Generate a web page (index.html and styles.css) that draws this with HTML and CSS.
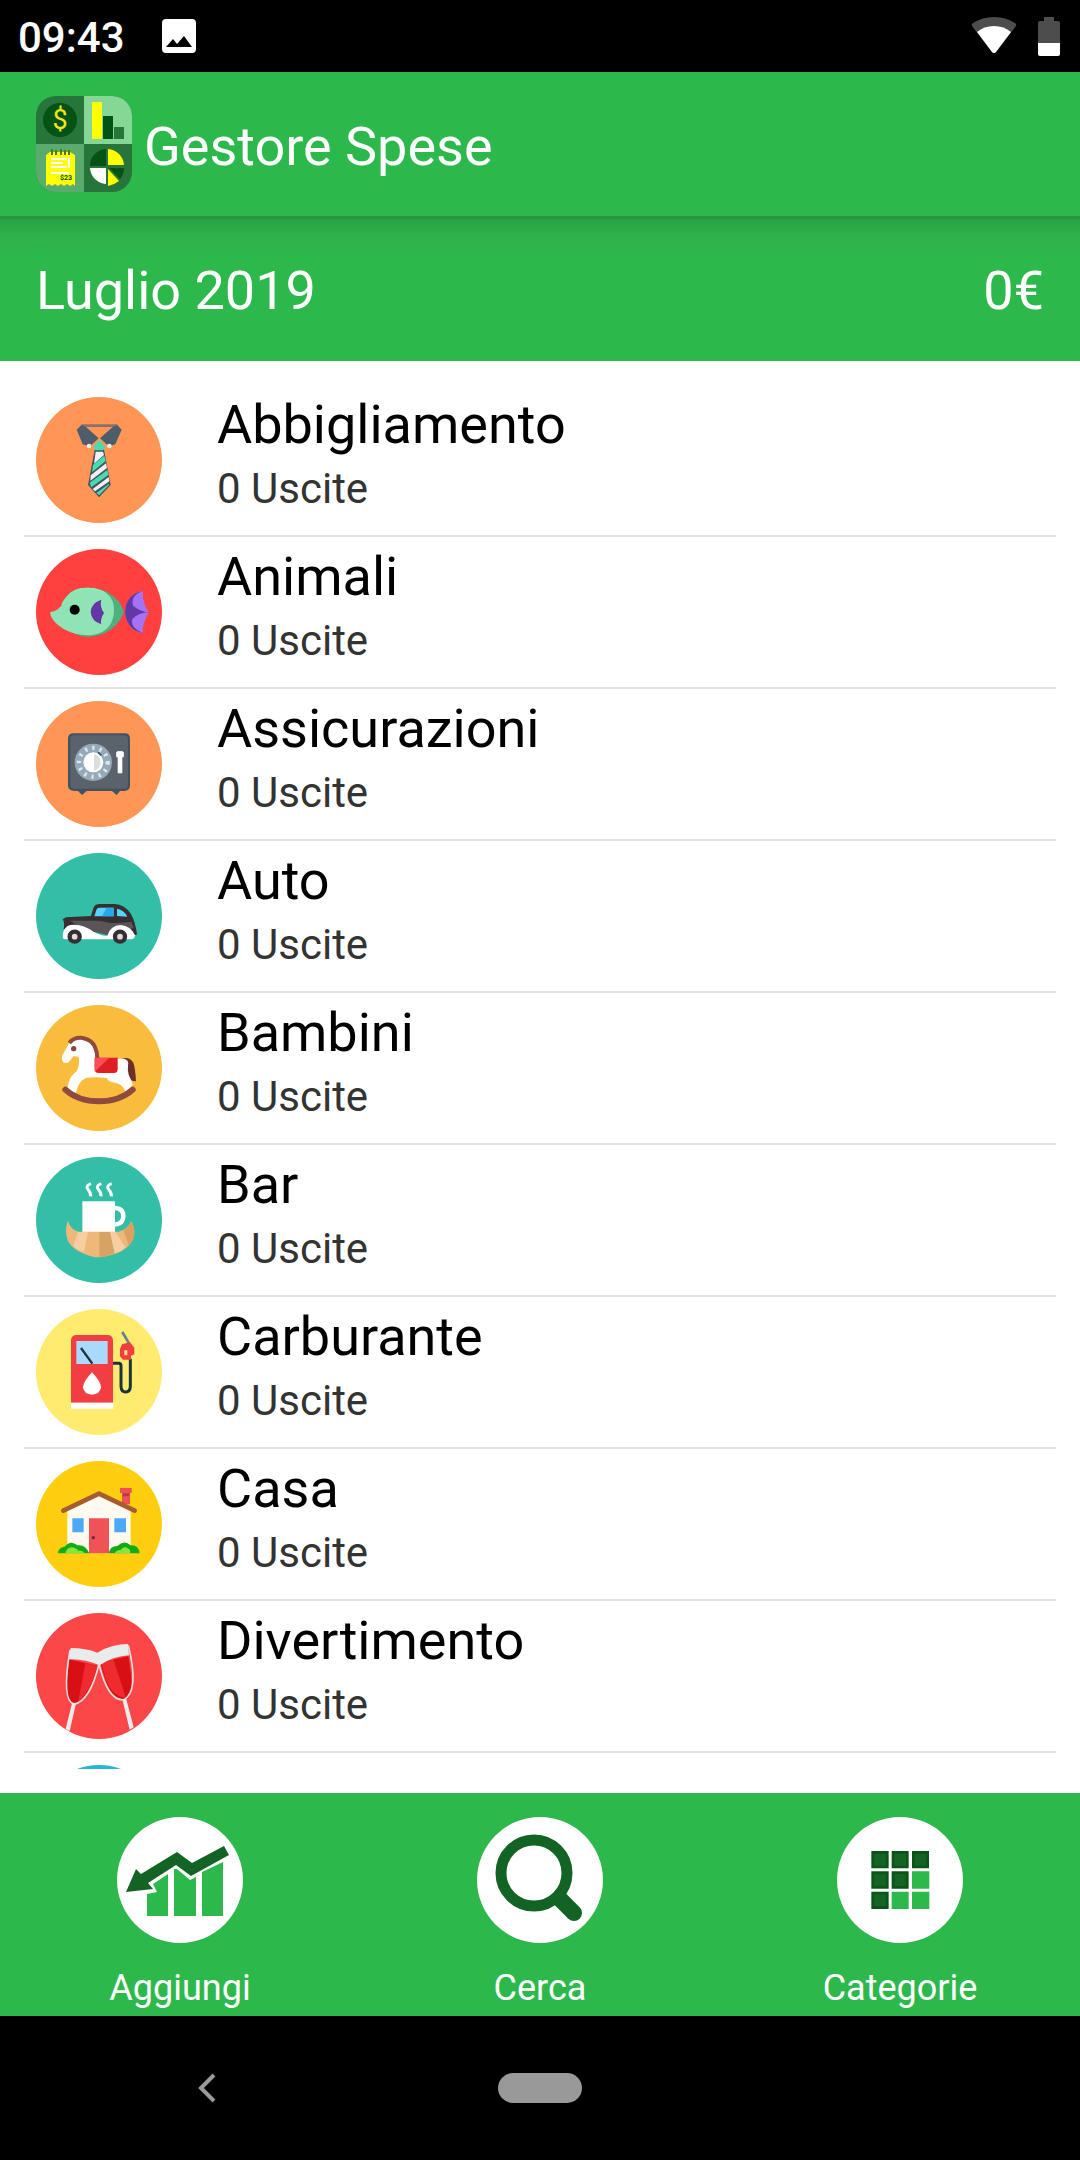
FILE: index.html
```html
<!DOCTYPE html>
<html lang="it">

<head>
  <meta charset="UTF-8" />
  <meta name="viewport" content="width=device-width, initial-scale=1.0" />
  <title>Gestore Spese</title>
  <link rel="stylesheet" href="styles.css">
</head>

<body>
  <div class="status-bar">
    <span class="clock">09:43</span>
    <svg class="status-picture" viewBox="0 0 34 34">
      <path fill="#fff" fill-rule="evenodd" d="M4 0h26a4 4 0 0 1 4 4v26a4 4 0 0 1-4 4H4a4 4 0 0 1-4-4V4a4 4 0 0 1 4-4zM4 28h26l-8-11-7 8-4-5z" />
    </svg>
    <svg class="status-wifi" viewBox="0 0 46 38">
      <path fill="#4d4d4d" d="M1 9Q0 7 2 6 11 0 23 0t21 6q2 1 1 3L25 35q-2 2-4 0z" />
      <path fill="#fff" d="M6 15Q13 9 23 9t17 6L25 35q-2 2-4 0z" />
    </svg>
    <svg class="status-battery" viewBox="0 0 22 39">
      <path fill="#4d4d4d" d="M6 0h10v4h4a2 2 0 0 1 2 2v20H0V6a2 2 0 0 1 2-2h4z" />
      <path fill="#fff" d="M0 26h22v11a2 2 0 0 1-2 2H2a2 2 0 0 1-2-2z" />
    </svg>
  </div>

  <header class="app-header">
    <svg class="app-logo" viewBox="0 0 96 96">
      <clipPath id="logoClip"><rect width="96" height="96" rx="20" /></clipPath>
      <g clip-path="url(#logoClip)">
        <rect width="96" height="96" fill="#27753a" />
        <rect x="48" width="48" height="48" fill="#86d696" />
        <rect y="48" width="48" height="48" fill="#5cab6e" />
        <circle cx="24" cy="24" r="17" fill="#035314" />
        <text class="logo-dollar" x="24" y="33" text-anchor="middle">$</text>
        <rect x="56" y="6" width="10" height="37" fill="#ff0" />
        <rect x="67" y="20" width="10" height="23" fill="#035314" />
        <rect x="78" y="31" width="10" height="12" fill="#27753a" />
        <path fill="#ff0" d="M10 59l4-3h20l5 3v31l-2-2-3 2-3-2-3 2-3-2-3 2-3-2-3 2-3-2-3 2z" />
        <path stroke="#4f7a16" stroke-width="2" d="M16 53v6M20 54v5M25 53v6M29 54v5M33 54v5" />
        <path stroke="#fff" stroke-width="2" d="M15 63h16M15 67h12M15 71h16M15 77h18M33 62v10" />
        <text class="logo-total" x="24" y="84">$23</text>
        <path fill="#035314" d="M70 70H54a17 17 0 0 1 16-17z" />
        <path fill="#fff" d="M54 72h16v16a17 17 0 0 1-16-16z" />
        <path fill="#ff0" d="M72 53a17 17 0 0 1 16 16H72zM72 73l11 12q-5 4-11 5z" />
        <path fill="#035314" d="M73 72h15q0 6-4 11z" />
      </g>
    </svg>
    <h1 class="app-title">Gestore Spese</h1>
  </header>

  <section class="month-bar">
    <span>Luglio 2019</span>
    <span>0€</span>
  </section>

  <main class="content">
    <ul class="category-list">
      <li class="category">
        <svg class="category-icon orange" viewBox="6 6 378 378">
          <path fill="#8a7066" d="M142 88h108v8H142z" />
          <path fill="#4e5d6b" d="M128 104l14-14 14 6 38 34-26 24-22-6zM263 104l-13-14-14 6-38 34 26 24 20-6z" />
          <circle cx="165" cy="153" r="7" fill="#e3edf4" />
          <circle cx="226" cy="153" r="7" fill="#e3edf4" />
          <path fill="#45525f" d="M182 164h28l20 106-35 37-33-37z" />
          <path fill="#f2eef4" d="M185 170h22l3 10-30 26z" />
          <path fill="#46dcb0" d="M178 158l13-20h9l14 20-8 8h-22z" />
          <path fill="#46dcb0" d="M177 210l34-28 4 16-41 34z" />
          <path fill="#f2eef4" d="M170 241l46-36 3 14-50 38z" />
          <path fill="#46dcb0" d="M167 263l53-38 3 15-51 37z" />
          <path fill="#f2eef4" d="M176 282l48-36 2 13-43 30z" />
          <path fill="#46dcb0" d="M187 294l38-28v4l-30 31z" />
        </svg>
        <div class="category-text">
          <h2>Abbigliamento</h2>
          <p>0 Uscite</p>
        </div>
      </li>
      <li class="category">
        <svg class="category-icon red" viewBox="6 462 378 378">
          <path fill="#4db07e" d="M130 590q40-22 90 2 38 20 50 59-16 46-64 66-50 18-86-2z" />
          <path fill="#8fe3b4" d="M48 652q26-2 46-36 22-38 70-38 76 6 76 66 0 64-64 76-46 4-86-17-40-24-42-51z" />
          <path fill="none" stroke="#7cf5b9" stroke-width="5" d="M84 630q24-48 68-49 44-2 64 16" />
          <circle cx="122" cy="644" r="15" fill="#000" />
          <path fill="#6238a5" d="M202 614q-30 10-32 36 2 28 32 38-4-16 8-34-14-20-8-40z" />
          <path fill="#a372f7" d="M327 588q-50 8-54 62 4 54 54 64-4-24 17-62-20-30-17-64z" />
          <path fill="#6238a5" d="M327 588q-50 8-54 62 4 54 54 64-38-14-32-42 20-20 49-20-26-2-47-20-8-32 30-44z" />
        </svg>
        <div class="category-text">
          <h2>Animali</h2>
          <p>0 Uscite</p>
        </div>
      </li>
      <li class="category">
        <svg class="category-icon orange" viewBox="48 33 378 378">
          <path fill="#3f5363" d="M162 130h152q16 0 16 16v142q0 14-18 15h-12l-10 12-14-12h-76l-14 12-12-12h-10q-20-2-20-16V146q0-16 18-16z" />
          <rect x="151" y="136" width="173" height="160" rx="12" fill="#5a626c" />
          <circle cx="220" cy="217" r="56" fill="#96a9b8" />
          <circle cx="220" cy="217" r="43" fill="none" stroke="#dce6ee" stroke-width="13" stroke-dasharray="7 15" />
          <circle cx="220" cy="217" r="30" fill="#fff" />
          <path fill="#ddd" d="M222 191a27 27 0 0 1 0 52z" />
          <path stroke="#3f5363" stroke-width="5" d="M234 187l10 9" />
          <path fill="#fff" d="M288 188q4-8 12-4 8-4 12 4l-1 14h-4v48h-14v-48h-4z" />
        </svg>
        <div class="category-text">
          <h2>Assicurazioni</h2>
          <p>0 Uscite</p>
        </div>
      </li>
      <li class="category">
        <svg class="category-icon teal" viewBox="48 489 378 378">
          <path fill="#372e31" d="M128 688l10-6 75-4 8-26q5-10 18-10h44q32 2 50 30 14 26 18 62l-10 2-210-18q4-20-3-30z" />
          <path fill="#5b5558" d="M150 692h86l42 8 56-4 8 18-70 24-82-22z" />
          <path fill="#56d4fb" d="M229 660q2-7 9-7h43v26h-58zM291 656q22 4 31 24l-31-2z" />
          <path fill="#25a9ec" d="M246 679l14-26h21v26z" />
          <path fill="#fff" d="M128 742q0-40 36-38 28 0 54 20 28 16 44 13 10-32 40-32 30 2 44 32l-4 7q-2 4-8 4H134q-6 0-6-6z" />
          <circle cx="164" cy="740" r="15" fill="#ddd" stroke="#372e31" stroke-width="13" />
          <circle cx="300" cy="740" r="15" fill="#ddd" stroke="#372e31" stroke-width="13" />
        </svg>
        <div class="category-text">
          <h2>Auto</h2>
          <p>0 Uscite</p>
        </div>
      </li>
      <li class="category">
        <svg class="category-icon amber" viewBox="48 45 378 378">
          <path fill="#6b3129" d="M306 206q22-8 34 12 6 16 8 56-20 0-26-20z" />
          <path fill="#fff" d="M148 158q20-20 50-8 28 14 30 56h82q18 2 14 20-2 16 2 28 8 16 12 30l-20 22q-12-26-34-28-16 0-24-14-40-4-62 0-24 10-30 44l-26-8q2-38 28-56 10-20 6-44-10-2-16-1l-10 13q-6 10-18 6-8-6-6-20z" />
          <path fill="none" stroke="#8f4a3f" stroke-width="12" d="M148 159q14-18 40-15 30 6 38 30 6 14 6 30" />
          <circle cx="161" cy="176" r="8" fill="#8f4a3f" />
          <path fill="#df1e26" d="M224 203h69v35q0 11-11 11h-46q-12 0-12-13z" />
          <path fill="#fb4d57" d="M224 203h44l-44 42z" />
          <path fill="none" stroke="#8f4a3f" stroke-width="18" stroke-linecap="round" d="M136 299q38 35 101 35t101-35" />
        </svg>
        <div class="category-text">
          <h2>Bambini</h2>
          <p>0 Uscite</p>
        </div>
      </li>
      <li class="category">
        <svg class="category-icon teal" viewBox="48 501 378 378">
          <path fill="none" stroke="#fff" stroke-width="9" d="M213 581q-18 6-9 17t8 21M244 581q-18 6-9 17t8 21M275 581q-18 6-9 17t8 21" />
          <path fill="#fff" d="M187 634h98v104h-98z" />
          <path fill="none" stroke="#fff" stroke-width="13" d="M282 654q28 0 28 24t-28 26" />
          <path fill="#efb87a" d="M144 692q8 28 32 33h120q26-5 38-31 14 24 6 52-18 44-100 56-70-6-96-48-12-34 0-62z" />
          <path fill="#f5cfa1" d="M174 726h30l-10 60q-20-4-34-19z" />
          <path fill="#efb87a" d="M204 726h34v76q-26 0-46-14z" />
          <path fill="#d7a364" d="M238 726h34l12 64q-20 10-46 12z" />
          <path fill="#f5cfa1" d="M270 726h16l30 46q-14 16-32 18z" />
          <path fill="#dda05f" d="M310 720q18-8 24-26 14 24 6 52-6 14-14 20z" />
        </svg>
        <div class="category-text">
          <h2>Bar</h2>
          <p>0 Uscite</p>
        </div>
      </li>
      <li class="category">
        <svg class="category-icon lemon" viewBox="48 57 378 378">
          <path fill="#f23d42" d="M153 338V152q0-17 17-17h92q17 0 17 17v186z" />
          <path fill="#fff" d="M153 338h127v18H153z" />
          <path fill="#a9dafb" d="M169 153h94v69h-94z" />
          <path stroke="#19343e" stroke-width="7" d="M183 174l34 47" />
          <path fill="#fff" d="M216 247q28 30 27 45-3 22-27 22t-27-22q0-16 27-45z" />
          <path fill="none" stroke="#19343e" stroke-width="9" d="M279 220h17q7 0 7 8v62q1 16 14 16t14-16v-84" />
          <path stroke="#66808c" stroke-width="8" d="M307 126l20 34" />
          <path fill="#f23d42" fill-rule="evenodd" d="M306 163l24-6 13 16v20l-10 4v12h-24l-9-10v-22zM313 181v15h9v-15z" />
        </svg>
        <div class="category-text">
          <h2>Carburante</h2>
          <p>0 Uscite</p>
        </div>
      </li>
      <li class="category">
        <svg class="category-icon yellow" viewBox="48 513 378 378">
          <path fill="#ef5055" d="M300 594h35v15h-5v34h-24v-34h-6z" />
          <path fill="#b83b46" d="M308 610h20v9h-20z" />
          <path fill="#fffaf0" d="M237 614l95 44v132H142V658z" />
          <path fill="none" stroke="#a85b31" stroke-width="14" stroke-linecap="round" stroke-linejoin="round" d="M130 662l107-51 107 51" />
          <path fill="#4da8fa" d="M157 685h34v42h-34zM283 685h35v42h-35z" />
          <path fill="#ef5357" d="M207 685h60v105h-60z" />
          <circle cx="220" cy="743" r="5" fill="#7d2530" />
          <path fill="#12ab16" d="M114 790q2-20 20-20 18-22 38-4 24-4 36 24zM266 790q4-22 26-22 20-20 40-2 24-2 27 24z" />
          <path fill="#88e63b" d="M136 790q4-18 20-18 14 2 18 10 14-2 20 8zM284 790q6-10 18-10 8-12 20-6 12 6 8 16z" />
        </svg>
        <div class="category-text">
          <h2>Casa</h2>
          <p>0 Uscite</p>
        </div>
      </li>
      <li class="category">
        <svg class="category-icon coral" viewBox="48 69 378 378">
          <path fill="#d80f13" d="M147 208l88 20q-18 72-58 110-44 4-38-60zM241 218l84-20q20 110-2 128-46 6-66-54z" />
          <path fill="#f02b2e" d="M196 220l36 8q-14 66-58 110zM244 216l36-8 38 116q-42-6-60-54z" />
          <path fill="#e9eced" d="M152 174q46 0 80 14 42-26 92-26l3 34q-46 2-88 30-46-20-92-18z" />
          <path fill="none" stroke="#dfe2e4" stroke-width="5" d="M150 180q-26 152 12 163 48-10 75-121 26 110 74 108 48-26 14-164" />
          <path fill="#e9eced" d="M156 340h12l-19 84-12-7zM307 328h12l22 84-12 7z" />
        </svg>
        <div class="category-text">
          <h2>Divertimento</h2>
          <p>0 Uscite</p>
        </div>
      </li>
      <li class="category">
        <div class="category-icon blue"></div>
      </li>
    </ul>
  </main>

  <footer class="actions">
    <button class="action" type="button">
      <svg class="action-icon" viewBox="0 0 126 126">
        <path fill="#2db84b" d="M30 99V77l10-2-4-8 15-10v42zM57 99V52h3l13 11 6-3v39zM85 99V55l21-10v54z" />
        <path fill="#136424" d="M9 75l10-23 5 5 36-22 15 11 32-17 5 9-38 21-15-11-28 18 5 6z" />
      </svg>
      <span>Aggiungi</span>
    </button>
    <button class="action" type="button">
      <svg class="action-icon" viewBox="0 0 126 126">
        <circle cx="57" cy="56" r="33" fill="none" stroke="#136424" stroke-width="11" />
        <path stroke="#136424" stroke-width="16" stroke-linecap="round" d="M84 83l13 13" />
        <path stroke="#136424" stroke-width="15" d="M78 77l8 8" />
      </svg>
      <span>Cerca</span>
    </button>
    <button class="action" type="button">
      <svg class="action-icon" viewBox="171 231 378 378">
        <path fill="#0b5415" d="M274 333h52v52h-52zM335 333h51v52h-51zM396 333h51v52h-51zM274 394h52v52h-52zM335 394h51v52h-51zM274 455h52v52h-52z" />
        <path fill="#136424" d="M282 341h36v36h-36zM343 341h35v36h-35zM404 341h35v36h-35zM282 402h36v36h-36zM343 402h35v36h-35zM282 463h36v36h-36z" />
        <path fill="#2db84b" d="M396 394h52v52h-52zM335 455h51v52h-51zM396 455h52v52h-52z" />
      </svg>
      <span>Categorie</span>
    </button>
  </footer>

  <nav class="system-nav">
    <button class="nav-back" type="button" aria-label="Indietro">
      <svg viewBox="0 0 18 30">
        <path fill="none" stroke="#999" stroke-width="4" d="M16 2L3 15l13 13" />
      </svg>
    </button>
    <button class="nav-home" type="button" aria-label="Home"></button>
  </nav>
</body>

</html>
```
FILE: styles.css
```css
:root {
  --primary-color: #2db84b;
  --text-color: #000000;
  --secondary-text: #333333;
  --divider-color: #e2e2e2;
  --nav-color: #999999;
}

* {
  margin: 0;
  padding: 0;
  box-sizing: border-box;
}

body {
  display: flex;
  flex-direction: column;
  height: 100vh;
  font-family: Roboto, "Noto Sans", sans-serif;
  color: var(--text-color);
  background-color: white;
}

svg {
  display: block;
  flex-shrink: 0;
}

button {
  border: none;
  background: transparent;
  font-family: inherit;
  cursor: pointer;
}

/* status bar */
.status-bar {
  display: flex;
  align-items: center;
  height: 72px;
  padding: 0 20px 0 18px;
  color: white;
  background-color: black;
}

.clock {
  padding-top: 3px;
  font-size: 42px;
  font-weight: 500;
}

.status-picture {
  width: 34px;
  height: 34px;
  margin-left: 37px;
}

.status-wifi {
  width: 46px;
  height: 38px;
  margin-left: auto;
}

.status-battery {
  width: 22px;
  height: 39px;
  margin-left: 21px;
}

/* header */
.app-header {
  display: flex;
  align-items: center;
  gap: 12px;
  height: 144px;
  padding: 0 36px;
  color: white;
  background-color: var(--primary-color);
}

.app-logo {
  width: 96px;
  height: 96px;
}

.logo-dollar {
  font-size: 27px;
  fill: #f5e510;
}

.logo-total {
  font-size: 7px;
  font-weight: 700;
  fill: #035314;
}

.app-title {
  padding-top: 4px;
  font-size: 54px;
  font-weight: 400;
}

.month-bar {
  display: flex;
  justify-content: space-between;
  align-items: center;
  height: 145px;
  padding: 4px 36px 0;
  font-size: 54px;
  color: white;
  background-color: var(--primary-color);
  background-image: linear-gradient(#279640 3px, #2aa144 3px, #2eb24a 20px, var(--primary-color) 40px);
}

/* categories */
.content {
  display: flex;
  flex: 1;
  min-height: 0;
  padding: 24px;
}

.category-list {
  flex: 1;
  overflow: hidden;
  list-style: none;
}

.category {
  display: flex;
  gap: 55px;
  padding: 12px;
  border-bottom: 2px solid var(--divider-color);
}

.category-icon {
  width: 126px;
  height: 126px;
  border-radius: 50%;
  overflow: hidden;
}

.category-text {
  height: 126px;
  margin-top: -4px;
}

.category-text h2 {
  font-size: 54px;
  font-weight: 400;
  line-height: 64px;
}

.category-text p {
  font-size: 42px;
  line-height: 64px;
  color: var(--secondary-text);
}

.orange {
  background-color: #ff9655;
}

.red {
  background-color: #ff403f;
}

.teal {
  background-color: #33bea8;
}

.amber {
  background-color: #f9bc3d;
}

.lemon {
  background-color: #ffeb70;
}

.yellow {
  background-color: #ffce0e;
}

.coral {
  background-color: #fb4747;
}

.blue {
  background-color: #27b5d5;
}

/* bottom actions */
.actions {
  display: flex;
  background-color: var(--primary-color);
}

.action {
  display: flex;
  flex: 1;
  flex-direction: column;
  align-items: center;
  gap: 24px;
  padding: 24px 0 7px;
  font-size: 36px;
  line-height: 42px;
  color: white;
}

.action-icon {
  width: 126px;
  height: 126px;
  border-radius: 50%;
  background-color: white;
}

.system-nav {
  display: grid;
  grid-template-columns: repeat(3, 1fr);
  align-items: center;
  justify-items: center;
  height: 144px;
  padding: 0 40px;
  background-color: black;
}

.nav-back svg {
  width: 18px;
  height: 30px;
}

.nav-home {
  width: 84px;
  height: 30px;
  border-radius: 15px;
  background-color: var(--nav-color);
}
```
